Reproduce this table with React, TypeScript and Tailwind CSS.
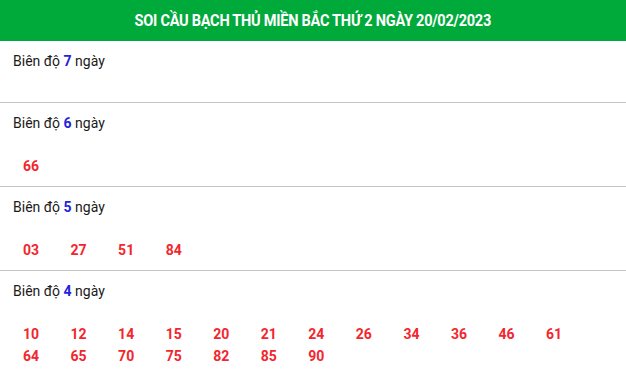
const groups = [
  { days: 7, nums: [] as string[] },
  { days: 6, nums: ["66"] },
  { days: 5, nums: ["03", "27", "51", "84"] },
  {
    days: 4,
    nums: ["10", "12", "14", "15", "20", "21", "24", "26", "34", "36", "46", "61", "64", "65", "70", "75", "82", "85", "90"],
  },
];

export default function App() {
  return (
    <div className="w-[626px] bg-white font-['Roboto',sans-serif]">
      <div className="h-[41px] bg-[#00aa3a] flex items-center justify-center">
        {/* condensed heading */}
        <h1 className="text-white font-bold text-[16px] tracking-[-0.3px] scale-x-[0.91]">
          SOI CẦU BẠCH THỦ MIỀN BẮC THỨ 2 NGÀY 20/02/2023
        </h1>
      </div>
      {groups.map((g) => (
        <div key={g.days} className="px-[13px] pt-[10px] pb-[9px] border-b border-[#c4c4c4]">
          <p className="h-5 leading-5 text-[14px] text-[#1a1a1a]">
            Biên độ <b className="text-[#2323dc]">{g.days}</b> ngày
          </p>
          <div className="mt-[22px] flex flex-wrap">
            {g.nums.map((n) => (
              <span key={n} className="w-[47.55px] pl-[10px] leading-[22px] text-[14px] font-bold text-[#f2262e]">
                {n}
              </span>
            ))}
          </div>
        </div>
      ))}
    </div>
  );
}
